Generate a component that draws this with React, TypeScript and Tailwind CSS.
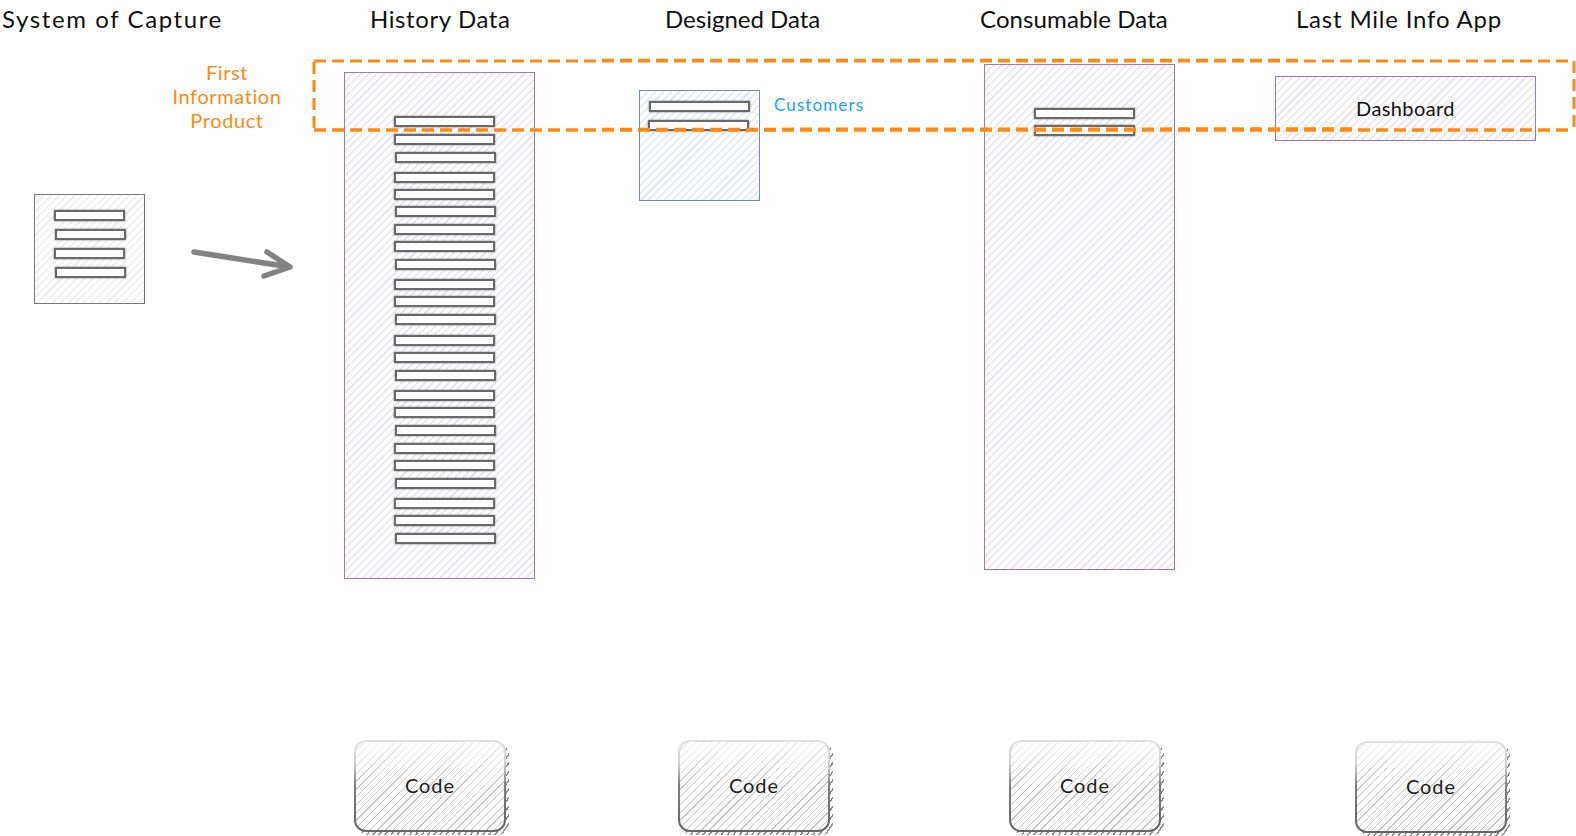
// App.tsx - sketch diagram of the data layers
const titleFont = "font-['Lato',sans-serif]";

const purpleHatch =
  "border border-[#9d76b3] bg-[repeating-linear-gradient(135deg,#ebe5f2_0,#ebe5f2_1.5px,#ffffff_1.5px,#ffffff_5.5px)]";

const historyTops = [
  116, 134, 152, 172, 189, 206, 224, 241, 259, 279, 296, 314, 335, 352, 370,
  390, 407, 425, 443, 460, 478, 498, 515, 533,
];

const titles = [
  { label: "System of Capture", pos: "left-[2px]", track: "tracking-[1.6px]" },
  { label: "History Data", pos: "left-[370px]", track: "tracking-[0.6px]" },
  { label: "Designed Data", pos: "left-[665px]", track: "tracking-[0px]" },
  { label: "Consumable Data", pos: "left-[980px]", track: "tracking-[0.1px]" },
  { label: "Last Mile Info App", pos: "left-[1296px]", track: "tracking-[0.8px]" },
];

const codeBoxes = [
  "left-[354px] top-[740px]",
  "left-[678px] top-[740px]",
  "left-[1009px] top-[740px]",
  "left-[1355px] top-[741px]",
];

function Row({ className = "w-[101px]" }: { className?: string }) {
  return (
    <div
      className={`h-[11px] border-2 border-[#6a6a6a] bg-white shadow-[0_0_2px_#7a7a7a] ${className}`}
    />
  );
}

function CodeBox({ pos }: { pos: string }) {
  return (
    <div className={`absolute h-[92px] w-[152px] ${pos}`}>
      <div className="absolute left-[3px] top-[3px] h-[92px] w-[152px] rounded-xl bg-[repeating-linear-gradient(125deg,#8a8a8a_0,#8a8a8a_1.5px,#ffffff_1.5px,#ffffff_5px)]" />
      <div className="relative h-full w-full rounded-xl bg-[linear-gradient(180deg,#e2e2e2_0%,#d2d2d2_25%,#7c7c7c_50%,#666666_100%)] p-[2px]">
        <div className="flex h-full w-full items-center justify-center rounded-[10px] bg-[linear-gradient(180deg,rgba(255,255,255,0.75),rgba(255,255,255,0)_55%),repeating-linear-gradient(135deg,#c4c4c4_0,#c4c4c4_1px,#ffffff_1px,#ffffff_5.5px)] pb-[3px]">
          <span className={`${titleFont} text-[20px] tracking-[0.9px] text-[#222]`}>Code</span>
        </div>
      </div>
    </div>
  );
}

export default function App() {
  return (
    <div className="relative h-[836px] w-[1576px] overflow-hidden bg-white">
      {titles.map((t) => (
        <div
          key={t.label}
          className={`absolute top-[4px] whitespace-nowrap text-[24px] leading-[30px] text-[#111] ${titleFont} ${t.pos} ${t.track}`}
        >
          {t.label}
        </div>
      ))}

      <div
        className={`absolute left-[165px] top-[60px] w-[124px] text-center text-[20px] leading-[24px] tracking-[0.6px] text-[#ff8a12] ${titleFont}`}
      >
        First
        <br />
        Information
        <br />
        Product
      </div>

      {/* system of capture */}
      <div className="absolute left-[34px] top-[194px] flex h-[110px] w-[111px] flex-col gap-[8px] border border-[#777] bg-[repeating-linear-gradient(135deg,#efefef_0,#efefef_1.5px,#ffffff_1.5px,#ffffff_5.5px)] pl-[19px] pt-[15px]">
        <Row className="w-[71px]" />
        <Row className="ml-px w-[71px]" />
        <Row className="w-[71px]" />
        <Row className="ml-px w-[71px]" />
      </div>

      <svg className="absolute left-0 top-0" width="1576" height="836" fill="none">
        <path
          d="M194 252 L290 267 M267 252 L290 267 L264 276"
          stroke="#838383"
          strokeWidth="5.5"
          strokeLinecap="round"
          strokeLinejoin="round"
        />
      </svg>

      {/* history data */}
      <div className={`absolute left-[344px] top-[72px] h-[507px] w-[191px] ${purpleHatch}`}>
        {historyTops.map((top, i) => (
          <div
            key={top}
            style={{ marginTop: i === 0 ? 43 : top - historyTops[i - 1] - 11 }}
            className={i % 3 === 2 ? "ml-[50px]" : "ml-[49px]"}
          >
            <Row />
          </div>
        ))}
      </div>

      {/* designed data */}
      <div className="absolute left-[639px] top-[90px] flex h-[111px] w-[121px] flex-col gap-[8px] border border-[#6c8ebf] bg-[repeating-linear-gradient(135deg,#dfeafb_0,#dfeafb_1.5px,#ffffff_1.5px,#ffffff_5.5px)] pl-[9px] pt-[10px]">
        <Row />
        <Row className="-ml-px w-[101px]" />
      </div>
      <div className={`absolute left-[774px] top-[93px] text-[17px] leading-[24px] tracking-[1.1px] text-[#12a5ff] ${titleFont}`}>
        Customers
      </div>

      {/* consumable data */}
      <div className={`absolute left-[984px] top-[64px] flex h-[506px] w-[191px] flex-col gap-[6px] pl-[49px] pt-[43px] ${purpleHatch}`}>
        <Row />
        <Row />
      </div>

      {/* dashboard */}
      <div className={`absolute left-[1275px] top-[76px] flex h-[65px] w-[261px] items-center justify-center pb-[2px] ${purpleHatch}`}>
        <span className={`${titleFont} text-[20px] tracking-[0.4px] text-[#111]`}>Dashboard</span>
      </div>

      {codeBoxes.map((pos) => (
        <CodeBox key={pos} pos={pos} />
      ))}

      {/* first information product frame */}
      <svg className="pointer-events-none absolute left-0 top-0" width="1576" height="836" fill="none">
        <g stroke="#ff8a12" strokeDasharray="12 6">
          <path d="M314 61 L1574 61" strokeWidth="3" />
          <path d="M602 60 L1300 60" strokeWidth="2.5" />
          <path d="M314 62 L314 130" strokeWidth="3" />
          <path d="M314 130 L1574 130" strokeWidth="3.5" />
          <path d="M602 129.5 L1358 129" strokeWidth="3.5" />
          <path d="M1574 61 L1574 130" strokeWidth="3" />
        </g>
      </svg>
    </div>
  );
}
